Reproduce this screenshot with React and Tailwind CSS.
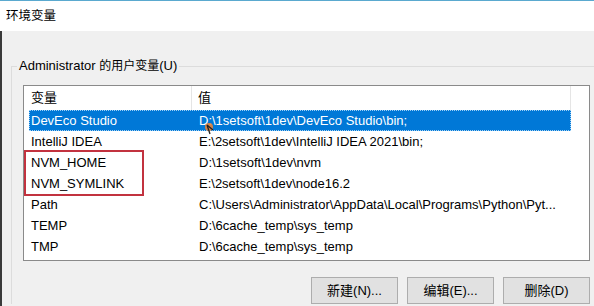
import React from "react";

const rows = [
  { name: "DevEco Studio", value: "D:\\1setsoft\\1dev\\DevEco Studio\\bin;", selected: true },
  { name: "IntelliJ IDEA", value: "E:\\2setsoft\\1dev\\IntelliJ IDEA 2021\\bin;" },
  { name: "NVM_HOME", value: "D:\\1setsoft\\1dev\\nvm" },
  { name: "NVM_SYMLINK", value: "E:\\2setsoft\\1dev\\node16.2" },
  { name: "Path", value: "C:\\Users\\Administrator\\AppData\\Local\\Programs\\Python\\Pyt..." },
  { name: "TEMP", value: "D:\\6cache_temp\\sys_temp" },
  { name: "TMP", value: "D:\\6cache_temp\\sys_temp" },
];

const font = { fontFamily: '"Liberation Sans", "Noto Sans CJK SC", sans-serif' };

const App = () => {
  return (
    <div
      className="w-[594px] h-[306px] overflow-hidden bg-white flex flex-col text-[13px] text-black"
      style={font}
    >
      {/* title bar */}
      <div className="h-[31px] shrink-0 border-t border-[#5aa9cf] bg-white pl-[6px] flex items-center text-[12.5px]">
        环境变量
      </div>
      {/* body */}
      <div className="flex-1 bg-[#f0f0f0] border-l-2 border-[#3a3a3a] pl-[9px] pt-[26px]">
        <fieldset className="w-[620px] border-t border-l border-[#dcdcdc]">
          <legend className="ml-[5px] px-[2px] leading-[18px]">
            Administrator <span className="text-[12px]">的用户变量</span>(U)
          </legend>
          <div className="relative ml-[11px] mt-[10px] w-[567px] h-[176px] bg-white border border-[#8a8a8a] pl-[5px]">
            {/* header */}
            <div className="flex h-[24px] items-center">
              <div className="w-[163px] shrink-0 pl-[2px] h-full flex items-center border-r border-[#e5e5e5]">变量</div>
              <div className="w-[379px] shrink-0 pl-[6px] h-full flex items-center border-r border-[#e5e5e5]">值</div>
            </div>
            {rows.map((r) => (
              <div
                key={r.name}
                className={
                  r.selected
                    ? "flex h-[21px] w-[542px] items-center bg-[#0078d7] text-white outline-1 outline-dotted outline-[#9fd0f5] -outline-offset-1"
                    : "flex h-[21px] w-[542px] items-center"
                }
              >
                <div className="w-[163px] shrink-0 pl-[2px] whitespace-nowrap">{r.name}</div>
                <div className="pl-[7px] whitespace-nowrap overflow-hidden">{r.value}</div>
              </div>
            ))}
            {/* highlight box */}
            <div className="absolute left-0 top-[64px] w-[120px] h-[46px] border-2 border-[#c2323f]" />
            {/* mouse cursor */}
            <svg className="absolute left-[180px] top-[36px]" width="12" height="14" viewBox="0 0 12 14">
              <circle cx="5" cy="5" r="4" fill="#e8843a" opacity="0.9" />
              <path d="M3 3 L6 12 M3 3 L9 8" stroke="#222" strokeWidth="1.3" fill="none" />
            </svg>
          </div>
          {/* buttons */}
          <div className="flex ml-[11px] w-[567px] justify-end gap-[9px] mt-[16px]">
            {["新建(N)...", "编辑(E)...", "删除(D)"].map((b) => (
              <button
                key={b}
                className="w-[87px] h-[27px] bg-[#e1e1e1] border border-[#adadad] flex items-center justify-center"
              >
                {b}
              </button>
            ))}
          </div>
        </fieldset>
      </div>
    </div>
  );
};

export default App;
